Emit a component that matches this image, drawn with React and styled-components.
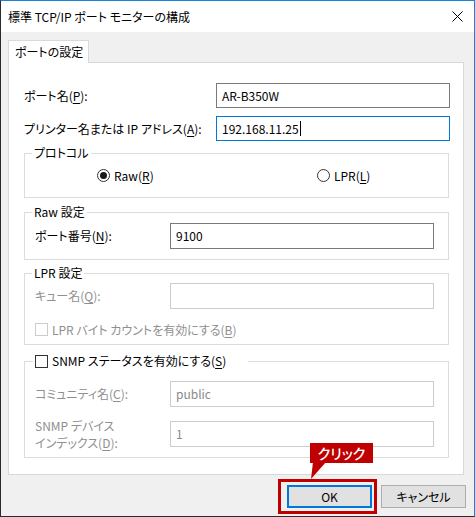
import React from 'react';
import styled, { createGlobalStyle } from 'styled-components';

const Global = createGlobalStyle`
  html, body { margin: 0; padding: 0; background: #fff; }
  body {
    font-family: "Noto Sans CJK JP", "Noto Sans", sans-serif;
    font-size: 12px;
    line-height: 16px;
    color: #000;
    font-feature-settings: "palt";
  }
  * { box-sizing: border-box; }
`;

const Window = styled.div`
  width: 475px;
  height: 517px;
  display: flex;
  flex-direction: column;
  border: 1px solid #2b2b2b;
  border-top-color: #1883d7;
  border-right-color: #1883d7;
  background: #f0f0f0;
`;

const TitleBar = styled.div`
  height: 31px;
  flex: none;
  background: #fff;
  display: flex;
  align-items: center;
  justify-content: space-between;
  padding: 0 11px 0 7px;
`;

const Title = styled.span`
  font-size: 12px;
  padding-top: 1px;
`;

const Body = styled.div`
  flex: 1;
  display: flex;
  flex-direction: column;
  padding: 8px 8px 8px 7px;
`;

const TabStrip = styled.div`
  display: flex;
  height: 22px;
  position: relative;
  z-index: 1;
`;

const Tab = styled.div`
  height: 23px;
  min-width: 75px;
  padding: 0 5px 0 6px;
  display: flex;
  align-items: center;
  white-space: nowrap;
  background: #fff;
  border: 1px solid #d9d9d9;
  border-bottom: none;
`;

const Panel = styled.div`
  flex: 1;
  margin-right: 2px;
  background: #fff;
  border: 1px solid #d9d9d9;
  padding: 20px 13px 16px 15px;
  display: flex;
  flex-direction: column;
`;

const TopRow = styled.div`
  display: grid;
  grid-template-columns: 192px 1fr;
  align-items: center;
  margin-top: ${p => p.$mt || 0}px;
`;

const Label = styled.div`
  color: ${p => (p.$disabled ? '#8f8f8f' : '#000')};
  white-space: nowrap;
  line-height: ${p => p.$lh || 16}px;
  align-self: ${p => (p.$top ? 'start' : 'center')};
`;

const Field = styled.div`
  height: ${p => p.$h || 25}px;
  border: 1px solid ${p => (p.$focus ? '#0078d7' : p.$disabled ? '#cccccc' : '#7a7a7a')};
  background: #fff;
  color: ${p => (p.$disabled ? '#8a8a8a' : '#000')};
  padding: 0 5px;
  display: flex;
  align-items: center;
  white-space: nowrap;
`;

const Caret = styled.span`
  display: inline-block;
  width: 1px;
  height: 15px;
  background: #000;
  margin-left: 1px;
`;

const Group = styled.div`
  position: relative;
  margin-top: ${p => p.$mt}px;
  margin-right: 1px;
  height: ${p => p.$h}px;
  border: 1px solid #dcdcdc;
  padding: ${p => p.$pad};
  display: flex;
  flex-direction: column;
`;

const Legend = styled.div`
  position: absolute;
  top: -9px;
  left: ${p => p.$left ?? 7}px;
  padding: 0 ${p => p.$pr ?? 2}px 0 2px;
  background: #fff;
  line-height: 16px;
  display: flex;
  align-items: center;
  gap: 4px;
  white-space: nowrap;
`;

const RadioRow = styled.div`
  height: 100%;
  display: grid;
  grid-template-columns: 292px 1fr;
  align-items: center;
`;

const RadioItem = styled.div`
  display: flex;
  align-items: center;
  gap: 4px;
  padding-left: ${p => p.$pl || 0}px;
`;

const RadioCircle = styled.span`
  width: 13px;
  height: 13px;
  border-radius: 50%;
  border: 1px solid #333;
  display: flex;
  align-items: center;
  justify-content: center;
  background: #fff;
  &::after {
    content: '';
    display: ${p => (p.$checked ? 'block' : 'none')};
    width: 7px;
    height: 7px;
    border-radius: 50%;
    background: #1a1a1a;
  }
`;

const Box = styled.span`
  width: 13px;
  height: 13px;
  flex: none;
  border: 1px solid ${p => (p.$disabled ? '#cccccc' : '#333')};
  background: #fff;
`;

const FieldRow = styled.div`
  display: grid;
  grid-template-columns: 135px 1fr;
  align-items: center;
  margin-top: ${p => p.$mt || 0}px;
`;

const CheckRow = styled.div`
  display: flex;
  align-items: center;
  gap: 4px;
  height: 17px;
  margin-top: ${p => p.$mt || 0}px;
  color: ${p => (p.$disabled ? '#8f8f8f' : '#000')};
`;

const ButtonRow = styled.div`
  flex: none;
  margin-top: 10px;
  height: 23px;
  display: flex;
  justify-content: flex-end;
  gap: 9px;
`;

const Button = styled.div`
  width: 85px;
  height: 23px;
  background: #e1e1e1;
  border: ${p => (p.$default ? '2px solid #0078d7' : '1px solid #adadad')};
  display: flex;
  align-items: center;
  justify-content: center;
  position: relative;
`;

const Highlight = styled.div`
  position: absolute;
  left: -11px;
  right: -7px;
  top: -8px;
  bottom: -8px;
  border: 3px solid #c00000;
  pointer-events: none;
`;

const Callout = styled.div`
  position: absolute;
  left: 21px;
  top: -44px;
  width: 63px;
  height: 20px;
  background: #c00000;
  color: #fff;
  font-size: 14px;
  font-weight: 500;
  display: flex;
  align-items: center;
  justify-content: center;
  white-space: nowrap;
`;

const Tail = styled.svg`
  position: absolute;
  left: 20px;
  top: -25px;
  overflow: visible;
`;

const U = styled.u`
  text-underline-offset: 2px;
`;

export default function App() {
  return (
    <>
      <Global />
      <Window>
        <TitleBar>
          <Title>標準 TCP/IP ポート モニターの構成</Title>
          <svg width="11" height="11" viewBox="0 0 11 11">
            <path d="M0.5 0.5 L10.5 10.5 M10.5 0.5 L0.5 10.5" stroke="#000" strokeWidth="1" fill="none" />
          </svg>
        </TitleBar>
        <Body>
          <TabStrip>
            <Tab>ポートの設定</Tab>
          </TabStrip>
          <Panel>
            <TopRow>
              <Label>ポート名(<U>P</U>):</Label>
              <Field>AR-B350W</Field>
            </TopRow>
            <TopRow $mt={8}>
              <Label>プリンター名または IP アドレス(<U>A</U>):</Label>
              <Field $focus>192.168.11.25<Caret /></Field>
            </TopRow>

            <Group $mt={12} $h={45} $pad="0">
              <Legend>プロトコル</Legend>
              <RadioRow>
                <RadioItem $pl={72}>
                  <RadioCircle $checked />
                  <span>Raw(<U>R</U>)</span>
                </RadioItem>
                <RadioItem>
                  <RadioCircle />
                  <span>LPR(<U>L</U>)</span>
                </RadioItem>
              </RadioRow>
            </Group>

            <Group $mt={14} $h={48} $pad="10px 14px 10px 10px">
              <Legend>Raw 設定</Legend>
              <FieldRow>
                <Label>ポート番号(<U>N</U>):</Label>
                <Field $h={26}>9100</Field>
              </FieldRow>
            </Group>

            <Group $mt={13} $h={72} $pad="9px 14px 6px 10px">
              <Legend>LPR 設定</Legend>
              <FieldRow>
                <Label $disabled>キュー名(<U>Q</U>):</Label>
                <Field $h={26} $disabled />
              </FieldRow>
              <CheckRow $mt={12} $disabled>
                <Box $disabled />
                <span>LPR バイト カウントを有効にする(<U>B</U>)</span>
              </CheckRow>
            </Group>

            <Group $mt={16} $h={97} $pad="19px 14px 14px 10px">
              <Legend $left={8} $pr={22}>
                <Box />
                <span>SNMP ステータスを有効にする(<U>S</U>)</span>
              </Legend>
              <FieldRow>
                <Label $disabled>コミュニティ名(<U>C</U>):</Label>
                <Field $h={26} $disabled>public</Field>
              </FieldRow>
              <FieldRow $mt={10}>
                <Label $disabled $top $lh={17}>
                  SNMP デバイス<br />インデックス(<U>D</U>):
                </Label>
                <Field $h={26} $disabled>1</Field>
              </FieldRow>
            </Group>
          </Panel>
          <ButtonRow>
            <Button $default>
              OK
              <Highlight />
              <Tail width="20" height="20">
                <polygon points="4,0 17,0 2,17" fill="#c00000" />
              </Tail>
              <Callout>クリック</Callout>
            </Button>
            <Button>キャンセル</Button>
          </ButtonRow>
        </Body>
      </Window>
    </>
  );
}
